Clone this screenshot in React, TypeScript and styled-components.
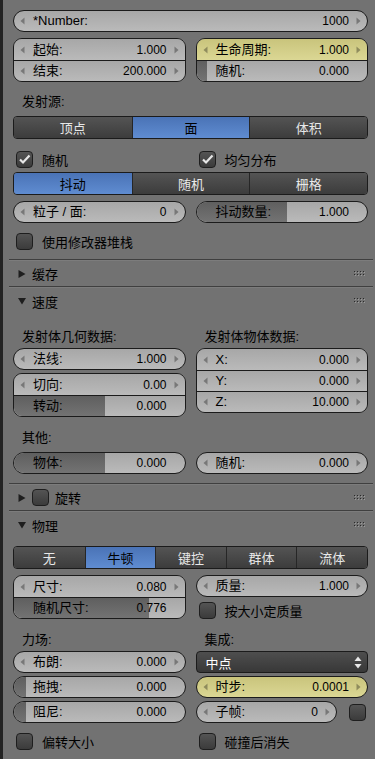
import React from "react";
import styled, { createGlobalStyle } from "styled-components";

const GlobalStyle = createGlobalStyle`
  html, body {
    margin: 0;
    padding: 0;
    background: #727272;
  }
  body {
    font-family: "Liberation Sans", "Noto Sans CJK SC", sans-serif;
  }
`;

type Tone = "gray" | "yellow";

const Page = styled.div`
  width: 375px;
  height: 759px;
  display: flex;
  background: #727272;
  overflow: hidden;
`;

const Strip = styled.div`
  width: 3px;
  flex: none;
  background: #232323;
`;

const Main = styled.div`
  flex: 1;
  display: flex;
  flex-direction: column;
`;

const Block = styled.div<{ $pt?: number }>`
  display: flex;
  flex-direction: column;
  padding: ${(p) => p.$pt ?? 0}px 7px 0 10px;
`;

const Two = styled.div<{ $mt?: number }>`
  display: grid;
  grid-template-columns: 1fr 1fr;
  column-gap: 10px;
  align-items: start;
  margin-top: ${(p) => p.$mt ?? 0}px;
`;

const Col = styled.div`
  display: flex;
  flex-direction: column;
  min-width: 0;
`;

const SubLabel = styled.div<{ $mt?: number }>`
  height: 20px;
  line-height: 20px;
  padding-left: 9px;
  font-size: 13px;
  color: #000;
  margin-top: ${(p) => p.$mt ?? 0}px;
`;

const FieldBox = styled.div<{ $tone: Tone; $pill?: boolean; $mt?: number }>`
  position: relative;
  box-sizing: border-box;
  display: flex;
  align-items: center;
  gap: 8px;
  padding: 0 6px;
  overflow: hidden;
  margin-top: ${(p) => p.$mt ?? 0}px;
  height: ${(p) => (p.$pill ? 22 : 21)}px;
  background: ${(p) =>
    p.$tone === "yellow"
      ? "linear-gradient(to bottom, #c9c47c, #dbd794)"
      : "linear-gradient(to bottom, #a7a7a7, #bababa)"};
  border: ${(p) => (p.$pill ? "1px solid #1b1b1b" : "none")};
  border-radius: ${(p) => (p.$pill ? "11px" : "0")};

  & + & {
    border-top: ${(p) => (p.$pill ? "1px solid #1b1b1b" : "1px solid #1b1b1b")};
  }
`;

const Fill = styled.div`
  position: absolute;
  left: 0;
  top: 0;
  bottom: 0;
  background: linear-gradient(to bottom, #5f5f5f, #737373);
`;

const Arrow = styled.span<{ $hide?: boolean }>`
  position: relative;
  z-index: 1;
  width: 5px;
  height: 8px;
  flex: none;
  display: flex;
  visibility: ${(p) => (p.$hide ? "hidden" : "visible")};
`;

const FieldLabel = styled.span`
  position: relative;
  z-index: 1;
  flex: 1;
  font-size: 13px;
  line-height: 16px;
  color: #000;
  white-space: nowrap;
`;

const FieldValue = styled.span`
  position: relative;
  z-index: 1;
  margin-right: -1px;
  font-family: "Liberation Sans", sans-serif;
  font-size: 12px;
  line-height: 16px;
  color: #000;
`;

const Stack = styled.div<{ $mt?: number }>`
  display: flex;
  flex-direction: column;
  border: 1px solid #1b1b1b;
  border-radius: 9px;
  overflow: hidden;
  margin-top: ${(p) => p.$mt ?? 0}px;
`;

const Seg = styled.div<{ $n: number; $mt?: number }>`
  display: grid;
  grid-template-columns: repeat(${(p) => p.$n}, 1fr);
  height: 23px;
  box-sizing: border-box;
  border: 1px solid #1b1b1b;
  border-radius: 4px;
  overflow: hidden;
  margin-top: ${(p) => p.$mt ?? 0}px;
`;

const SegItem = styled.div<{ $on?: boolean }>`
  display: flex;
  align-items: center;
  justify-content: center;
  font-size: 13px;
  color: ${(p) => (p.$on ? "#000" : "#e8e8e8")};
  background: ${(p) =>
    p.$on
      ? "linear-gradient(to bottom, #4a73b6, #5f8cd1)"
      : "linear-gradient(to bottom, #545454, #3c3c3c)"};

  & + & {
    border-left: 1px solid #262626;
  }
`;

const CheckRow = styled.div<{ $mt?: number }>`
  display: flex;
  align-items: center;
  gap: 9px;
  height: 20px;
  padding-left: 3px;
  font-size: 13px;
  color: #000;
  margin-top: ${(p) => p.$mt ?? 0}px;
`;

const Box = styled.span`
  width: 17px;
  height: 17px;
  box-sizing: border-box;
  flex: none;
  border: 1px solid #1e1e1e;
  border-radius: 4px;
  background: linear-gradient(to bottom, #545454, #3b3b3b);
  display: flex;
  align-items: center;
  justify-content: center;
`;

const Separator = styled.div`
  height: 0;
  margin: 0 2px 0 6px;
  border-top: 1px solid #3f3f3f;
  border-bottom: 1px solid #7c7c7c;
`;

const Header = styled.div<{ $h: number }>`
  height: ${(p) => p.$h}px;
  display: flex;
  align-items: center;
  gap: 6px;
  padding: 0 10px 0 15px;
  font-size: 13px;
  color: #000;
`;

const HeaderTitle = styled.span`
  flex: 1;
`;

const Dropdown = styled.div`
  height: 22px;
  box-sizing: border-box;
  display: flex;
  align-items: center;
  padding: 0 5px 0 9px;
  border: 1px solid #1b1b1b;
  border-radius: 4px;
  background: linear-gradient(to bottom, #4e4e4e, #383838);
  color: #fff;
  font-size: 13px;
`;

const DropText = styled.span`
  flex: 1;
`;

const InlineRow = styled.div<{ $mt?: number }>`
  display: flex;
  align-items: center;
  gap: 12px;
  margin-top: ${(p) => p.$mt ?? 0}px;

  & > :first-child {
    flex: 1;
  }
`;

const SideBox = styled(Box)`
  margin-right: 2px;
`;

function LeftTri() {
  return (
    <svg width="5" height="8" viewBox="0 0 5 8">
      <path d="M4.5 0.5 L0.5 4 L4.5 7.5 Z" fill="rgba(0,0,0,0.32)" />
    </svg>
  );
}

function RightTri() {
  return (
    <svg width="5" height="8" viewBox="0 0 5 8">
      <path d="M0.5 0.5 L4.5 4 L0.5 7.5 Z" fill="rgba(0,0,0,0.32)" />
    </svg>
  );
}

interface FieldProps {
  label: string;
  value: string;
  arrows?: boolean;
  fill?: number;
  tone?: Tone;
  pill?: boolean;
  mt?: number;
}

function Field({ label, value, arrows = true, fill, tone = "gray", pill, mt }: FieldProps) {
  return (
    <FieldBox $tone={tone} $pill={pill} $mt={mt}>
      {fill !== undefined && <Fill style={{ width: fill }} />}
      <Arrow $hide={!arrows}>
        <LeftTri />
      </Arrow>
      <FieldLabel>{label}</FieldLabel>
      <FieldValue>{value}</FieldValue>
      <Arrow $hide={!arrows}>
        <RightTri />
      </Arrow>
    </FieldBox>
  );
}

function Check({ on }: { on?: boolean }) {
  return (
    <Box>
      {on && (
        <svg width="13" height="13" viewBox="0 0 13 13">
          <path d="M2 6.5 L5 9.5 L11.5 2.5" fill="none" stroke="#e6e6e6" strokeWidth="2.2" />
        </svg>
      )}
    </Box>
  );
}

function CheckItem({ label, on, mt }: { label: string; on?: boolean; mt?: number }) {
  return (
    <CheckRow $mt={mt}>
      <Check on={on} />
      <span>{label}</span>
    </CheckRow>
  );
}

function Grip() {
  const dots = [0, 3, 6, 9];
  return (
    <svg width="11" height="6" viewBox="0 0 11 6">
      {[0, 3].map((y) =>
        dots.map((x) => (
          <g key={`${x}-${y}`}>
            <rect x={x + 1} y={y + 1} width="1" height="1" fill="#9a9a9a" />
            <rect x={x} y={y} width="1" height="1" fill="#2a2a2a" />
          </g>
        ))
      )}
    </svg>
  );
}

function Tri({ open }: { open?: boolean }) {
  return open ? (
    <svg width="8" height="8" viewBox="0 0 8 8">
      <path d="M0 1 L8 1 L4 7.5 Z" fill="#1e1e1e" />
    </svg>
  ) : (
    <svg width="8" height="8" viewBox="0 0 8 8">
      <path d="M0.5 0 L7.5 4 L0.5 8 Z" fill="#1e1e1e" />
    </svg>
  );
}

function PanelHeader({ title, open, check, h }: { title: string; open?: boolean; check?: boolean; h: number }) {
  return (
    <Header $h={h}>
      <Tri open={open} />
      {check && <Check />}
      <HeaderTitle>{title}</HeaderTitle>
      <Grip />
    </Header>
  );
}

function Segmented({ items, active, mt }: { items: string[]; active: number; mt?: number }) {
  return (
    <Seg $n={items.length} $mt={mt}>
      {items.map((it, i) => (
        <SegItem key={it} $on={i === active}>
          {it}
        </SegItem>
      ))}
    </Seg>
  );
}

function UpDown() {
  return (
    <svg width="8" height="13" viewBox="0 0 8 13">
      <path d="M4 0.5 L7.5 5 L0.5 5 Z" fill="#e8e8e8" />
      <path d="M0.5 8 L7.5 8 L4 12.5 Z" fill="#e8e8e8" />
    </svg>
  );
}

export default function App() {
  return (
    <Page>
      <GlobalStyle />
      <Strip />
      <Main>
        <Block $pt={10}>
          <Field pill label="*Number:" value="1000" />
          <Two $mt={6}>
            <Stack>
              <Field label="起始:" value="1.000" />
              <Field label="结束:" value="200.000" />
            </Stack>
            <Stack>
              <Field tone="yellow" label="生命周期:" value="1.000" />
              <Field label="随机:" value="0.000" arrows={false} fill={10} />
            </Stack>
          </Two>
          <SubLabel $mt={10}>发射源:</SubLabel>
          <Segmented mt={4} items={["顶点", "面", "体积"]} active={1} />
          <Two $mt={10}>
            <CheckItem label="随机" on />
            <CheckItem label="均匀分布" on />
          </Two>
          <Segmented mt={3} items={["抖动", "随机", "栅格"]} active={0} />
          <Two $mt={6}>
            <Field pill label="粒子 / 面:" value="0" />
            <Field pill label="抖动数量:" value="1.000" arrows={false} fill={90} />
          </Two>
          <CheckItem mt={8} label="使用修改器堆栈" />
        </Block>

        <div style={{ height: 8 }} />
        <Separator />
        <PanelHeader h={25} title="缓存" />
        <Separator />
        <PanelHeader h={26} title="速度" open />

        <Block $pt={13}>
          <Two>
            <Col>
              <SubLabel>发射体几何数据:</SubLabel>
              <Field pill mt={1} label="法线:" value="1.000" />
              <Stack $mt={3}>
                <Field label="切向:" value="0.00" />
                <Field label="转动:" value="0.000" arrows={false} fill={91} />
              </Stack>
            </Col>
            <Col>
              <SubLabel>发射体物体数据:</SubLabel>
              <Stack $mt={1}>
                <Field label="X:" value="0.000" />
                <Field label="Y:" value="0.000" />
                <Field label="Z:" value="10.000" />
              </Stack>
            </Col>
          </Two>
          <SubLabel $mt={11}>其他:</SubLabel>
          <Two $mt={4}>
            <Field pill label="物体:" value="0.000" arrows={false} fill={91} />
            <Field pill label="随机:" value="0.000" />
          </Two>
        </Block>

        <div style={{ height: 9 }} />
        <Separator />
        <PanelHeader h={25} title="旋转" check />
        <Separator />
        <PanelHeader h={26} title="物理" open />

        <Block $pt={8}>
          <Segmented items={["无", "牛顿", "键控", "群体", "流体"]} active={1} />
          <Two $mt={6}>
            <Stack>
              <Field label="尺寸:" value="0.080" />
              <Field label="随机尺寸:" value="0.776" arrows={false} fill={135} />
            </Stack>
            <Col>
              <Field pill label="质量:" value="1.000" />
              <CheckItem mt={3} label="按大小定质量" />
            </Col>
          </Two>
          <Two $mt={10}>
            <Col>
              <SubLabel>力场:</SubLabel>
              <Field pill mt={1} label="布朗:" value="0.000" />
              <Field pill mt={3} label="拖拽:" value="0.000" arrows={false} fill={12} />
              <Field pill mt={3} label="阻尼:" value="0.000" arrows={false} fill={12} />
            </Col>
            <Col>
              <SubLabel>集成:</SubLabel>
              <Dropdown style={{ marginTop: 1 }}>
                <DropText>中点</DropText>
                <UpDown />
              </Dropdown>
              <Field pill mt={3} tone="yellow" label="时步:" value="0.0001" />
              <InlineRow $mt={3}>
                <Field pill label="子帧:" value="0" />
                <SideBox />
              </InlineRow>
            </Col>
          </Two>
          <Two $mt={8}>
            <CheckItem label="偏转大小" />
            <CheckItem label="碰撞后消失" />
          </Two>
        </Block>
      </Main>
    </Page>
  );
}
